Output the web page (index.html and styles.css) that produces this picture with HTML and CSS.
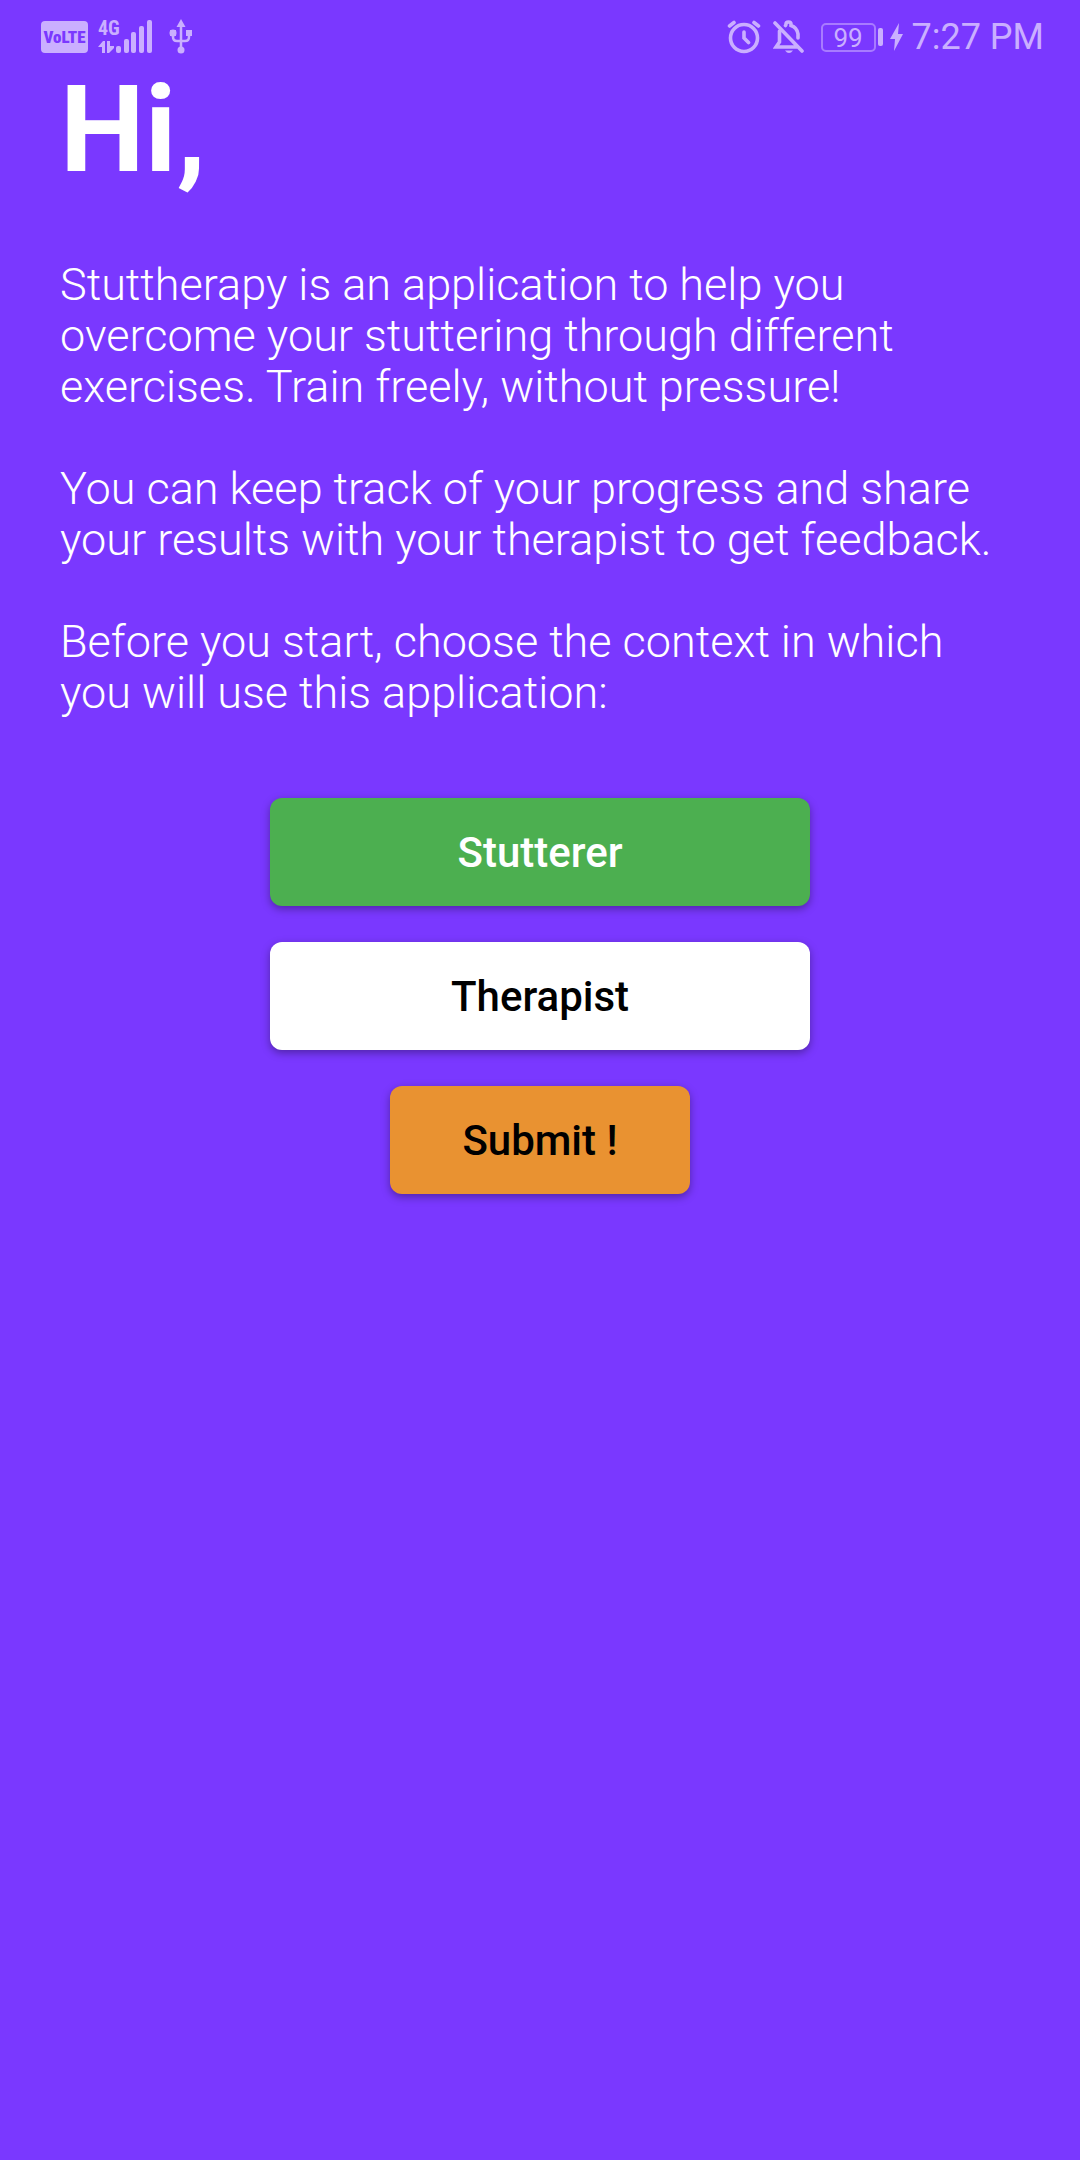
FILE: index.html
```html
<!DOCTYPE html>
<html lang="en">
<head>
<meta charset="utf-8">
<meta name="viewport" content="width=device-width, initial-scale=1">
<title>Stuttherapy</title>
<link rel="stylesheet" href="styles.css">
</head>
<body>
<header class="status">
  <div class="status-group">
    <span class="volte">VoLTE</span>
    <div class="signal">
      <span class="network">4G</span>
      <svg class="bars" width="54" height="34" viewBox="0 0 54 34" aria-hidden="true">
        <path d="M0 27 5 21H7V33H4V27ZM9 21H12V26H16V28L11 33H9Z"/>
        <rect x="18" y="26" width="5" height="7" rx="2"/>
        <rect x="26" y="19" width="5" height="14" rx="2"/>
        <rect x="33" y="12" width="5" height="21" rx="2"/>
        <rect x="41" y="6" width="5" height="27" rx="2"/>
        <rect x="49" y="0" width="5" height="33" rx="2"/>
      </svg>
    </div>
    <svg class="usb" width="24" height="36" viewBox="0 0 24 36" aria-hidden="true">
      <path d="M12 0 16.500 8H7.500ZM1 11H7V17H1ZM17 11H23V17H17Z"/>
      <circle cx="4" cy="14" r="3.500"/>
      <circle cx="12" cy="31" r="3.500"/>
      <path class="line" stroke-width="2.500" d="M12 6V31M4 15V18Q4 22 8 22H16Q20 22 20 18V15"/>
    </svg>
  </div>
  <div class="status-group status-right">
    <svg class="alarm" width="34" height="34" viewBox="0 0 34 34" aria-hidden="true">
      <g class="line" stroke-width="3.600">
        <circle cx="17" cy="18" r="13.500"/>
        <path d="M17 12V18L21.500 22.500M2.500 6 7 2.500M27 2.500 31.500 6"/>
      </g>
    </svg>
    <svg class="bell" width="32" height="34" viewBox="0 0 32 34" aria-hidden="true">
      <path class="line" stroke-width="3.600" d="M2 3 29 31M6.500 11V22L3 27H24M12.500 5.500Q13 5 13 4Q13 2 15.500 2T18 4V5.500Q24 7.500 25 14V18"/>
      <path d="M12 30.500H20Q18 33 16 33T12 30.500Z"/>
    </svg>
    <div class="battery"><span class="level">99</span><span class="cap"></span></div>
    <svg class="bolt" width="14" height="28" viewBox="0 0 14 28" aria-hidden="true">
      <path d="M9 0 0 16H5L4 28 13 11H8Z"/>
    </svg>
    <time class="time">7:27 PM</time>
  </div>
</header>
<main class="welcome">
  <h1 class="title">Hi,</h1>
  <div class="intro">
    <p>Stuttherapy is an application to help you overcome your stuttering through different exercises. Train freely, without pressure!</p>
    <p>You can keep track of your progress and share your results with your therapist to get feedback.</p>
    <p>Before you start, choose the context in which you will use this application:</p>
  </div>
  <div class="actions">
    <button class="button selected" type="button">Stutterer</button>
    <button class="button" type="button">Therapist</button>
    <button class="button submit" type="submit">Submit !</button>
  </div>
</main>
</body>
</html>
```
FILE: styles.css
```css
* {
  box-sizing: border-box;
}

body {
  margin: 0;
  min-height: 100vh;
  background: #7a38ff;
  color: #fff;
  font-family: Roboto, "Liberation Sans", sans-serif;
}

.status {
  display: flex;
  justify-content: space-between;
  height: 60px;
  padding: 13px 36px 0 41px;
  color: #caafff;
}

.status-group {
  display: flex;
  align-items: center;
  height: 48px;
}

.status svg {
  display: block;
  fill: currentColor;
}

.status .line {
  fill: none;
  stroke: currentColor;
  stroke-linecap: round;
}

.volte {
  width: 47px;
  height: 32px;
  border-radius: 4px;
  background: #caafff;
  color: #7a38ff;
  font: 900 17px/32px "Roboto Condensed", "Liberation Sans Narrow", Roboto, sans-serif;
  text-align: center;
}

.signal {
  position: relative;
  margin-left: 10px;
}

.network {
  position: absolute;
  top: 0;
  left: 0;
  font: 700 20px/16px "Roboto Condensed", "Liberation Sans Narrow", Roboto, sans-serif;
}

.usb {
  margin-left: 17px;
}

.bell {
  margin-left: 12px;
}

.battery {
  display: flex;
  align-items: center;
  gap: 2px;
  margin-left: 16px;
}

.level {
  width: 55px;
  height: 29px;
  border: 2px solid #a87bff;
  border-radius: 5px;
  font-size: 26px;
  line-height: 26px;
  text-align: center;
}

.cap {
  width: 5px;
  height: 18px;
  border-radius: 2px;
  background: #caafff;
}

.bolt {
  margin-left: 7px;
}

.time {
  margin-left: 8px;
  font-size: 36px;
  line-height: 48px;
}

.welcome {
  padding: 0 60px 60px;
}

.title {
  margin: 0;
  font-size: 120px;
  line-height: 141px;
  font-weight: 700;
}

.intro {
  margin-top: 58px;
  font-size: 45px;
  line-height: 51px;
  font-weight: 300;
}

.intro p {
  margin: 0 0 51px;
}

.actions {
  display: flex;
  flex-direction: column;
  align-items: center;
  gap: 36px;
  margin-top: 80px;
}

.button {
  width: 540px;
  max-width: 100%;
  height: 108px;
  padding: 2px 0 0;
  border: 0;
  border-radius: 12px;
  background: #fff;
  color: #000;
  font: 500 42px/48px Roboto, "Liberation Sans", sans-serif;
  box-shadow: 0 3px 8px rgba(0, 0, 0, 0.35);
}

.selected {
  background: #4caf50;
  color: #fff;
}

.submit {
  width: 300px;
  background: #e99231;
}
```
